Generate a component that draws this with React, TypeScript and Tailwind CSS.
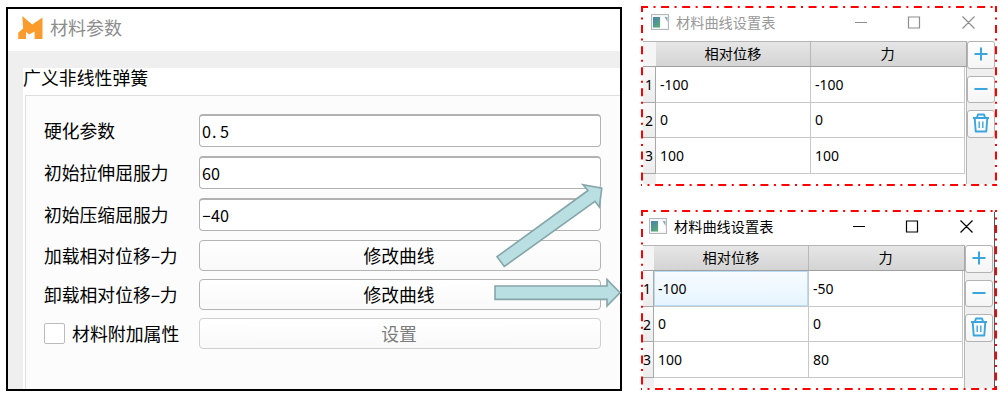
import React from "react";

const inputs = [
  { label: "硬化参数", value: "0.5" },
  { label: "初始拉伸屈服力", value: "60" },
  { label: "初始压缩屈服力", value: "-40" },
];

// Punctuation takes a half-width cell, the same as a digit.
function HalfWidth({ text }: { text: string }) {
  return (
    <>
      {text.split(/([-.])/).map((part, i) => {
        if (part === "-") return <span key={i} className="inline-block w-[9px] -translate-y-px scale-x-[1.7] text-center">-</span>;
        if (part === ".") return <span key={i} className="inline-block w-[9px] pl-px">.</span>;
        return <React.Fragment key={i}>{part}</React.Fragment>;
      })}
    </>
  );
}

function Label({ text }: { text: string }) {
  return (
    <span className="w-[155px] shrink-0 text-[17.8px] leading-none whitespace-nowrap">
      <HalfWidth text={text} />
    </span>
  );
}

function CurveButton({ text, disabled }: { text: string; disabled?: boolean }) {
  return (
    <button
      disabled={disabled}
      className={`flex h-[31px] w-[402px] items-center justify-center rounded-[4px] border bg-linear-to-b from-white to-[#f9f9f9] pr-[2px] text-[17.8px] leading-none ${
        disabled ? "border-[#cfcfcf] text-[#7d7d7d]" : "border-[#b4b4b4] text-black"
      }`}
    >
      {text}
    </button>
  );
}

function MaterialWindow() {
  return (
    <section className="mt-[7px] ml-[6px] flex h-[384px] w-[616px] shrink-0 flex-col border-2 border-black bg-[#efefef]">
      <header className="flex h-[42px] shrink-0 items-start bg-white pt-[6px] pl-[9px]">
        <svg width="28" height="26" viewBox="17 15 28 26" fill="#fb9b2b">
          <path d="M22.3 16 L32.2 24.4 L42.5 17.6 V39 H34.6 V31.4 L29 34.4 L26 31.8 V39 H18.3 V32.6 L23.2 28.6 Z" />
        </svg>
        <h1 className="ml-[5px] pt-[3px] text-[18px] leading-none text-[#8d8d8d]">材料参数</h1>
      </header>
      <div className="mt-[17px] ml-[15px] flex min-h-0 flex-1 flex-col bg-white text-black">
        <h2 className="h-[27px] pt-px text-[17.9px] leading-none">广义非线性弹簧</h2>
        <div className="ml-[2px] flex flex-1 flex-col border-t border-l border-[#dedede] bg-[#fcfcfc] pt-[18px] pl-[18px]">
          {inputs.map((f) => (
            <div key={f.label} className="mb-[9px] flex h-[33px] items-center">
              <Label text={f.label} />
              <div className="flex h-[33px] w-[402px] items-center rounded-[4px] border border-t-2 border-[#b2b2b2] bg-white pl-[2px] text-[16.2px] leading-none">
                <span className="whitespace-nowrap">
                  <HalfWidth text={f.value} />
                </span>
              </div>
            </div>
          ))}
          <div className="mb-[8px] flex h-[31px] items-center">
            <Label text="加载相对位移-力" />
            <CurveButton text="修改曲线" />
          </div>
          <div className="mb-[8px] flex h-[31px] items-center">
            <Label text="卸载相对位移-力" />
            <CurveButton text="修改曲线" />
          </div>
          <div className="flex h-[31px] items-center">
            <span className="h-[21px] w-[21px] shrink-0 rounded-[2px] border border-[#bcbcbc] bg-white" />
            <span className="w-[134px] shrink-0 pl-[7px] text-[17.9px] leading-none whitespace-nowrap">材料附加属性</span>
            <CurveButton text="设置" disabled />
          </div>
        </div>
      </div>
    </section>
  );
}

function DashedFrame({ phases }: { phases: number[] }) {
  const lines = ["M0 1 H356", "M355 0 V180", "M0 179 H356", "M1 0 V180"];
  return (
    <svg className="pointer-events-none absolute inset-0" width="356" height="180" fill="none" stroke="#ff0000" strokeWidth="2">
      {lines.map((d, i) => (
        <path key={d} d={d} strokeDasharray="8 5.5 2 5.57" strokeDashoffset={phases[i]} />
      ))}
    </svg>
  );
}

function SideButton({ children }: { children: React.ReactNode }) {
  return (
    <button className="mb-[7px] flex h-[27.5px] w-[28px] shrink-0 items-center justify-center rounded-[3px] border border-[#b3b3b3] bg-linear-to-b from-white to-[#f5f5f5] pb-px">
      <svg width="18" height="20" viewBox="0 0 18 20" fill="none" stroke="#3aa5de" strokeWidth="2">
        {children}
      </svg>
    </button>
  );
}

type CurveProps = {
  rows: [string, string][];
  active?: boolean;
  phases: number[];
};

function CurveWindow({ rows, active, phases }: CurveProps) {
  return (
    <section className="relative h-[180px] w-[356px] bg-white p-[2px] font-['Noto_Sans','Noto_Sans_CJK_SC',sans-serif]">
      <div className={`flex h-[176px] flex-col overflow-hidden ${active ? "border-r border-[#555555]" : ""}`}>
        <header className={`flex h-[33px] shrink-0 items-start ${active ? "pl-[6px] text-black" : "pl-[8px] text-[#999999]"}`}>
          <svg className="mt-[6px]" width="18" height="16" viewBox="0 0 18 16">
            <defs>
              <linearGradient id={active ? "paneA" : "paneB"} x1="0" y1="0" x2="0.6" y2="1">
                <stop offset="0" stopColor="#4c7fb4" />
                <stop offset="1" stopColor="#58a878" />
              </linearGradient>
            </defs>
            <rect x="0.5" y="0.5" width="17" height="15" fill="#f3f5f7" stroke="#b3b8bd" />
            <rect x="2" y="3" width="7" height="10.5" fill={active ? "url(#paneA)" : "url(#paneB)"} />
            <rect x="10.5" y="3" width="5.5" height="10.5" fill="#ffffff" />
            <path d="M13.5 3 H16.5 V8 Z" fill="#86b0b0" />
          </svg>
          <h2 className="mt-[7px] ml-[7px] w-[100px] font-['Noto_Sans_CJK_SC',sans-serif] text-[14.2px] leading-none whitespace-nowrap">
            材料曲线设置表
          </h2>
          <svg
            className={`mt-[7px] ${active ? "ml-[78px]" : "ml-[78px]"}`}
            width="122"
            height="14"
            viewBox="0 0 122 14"
            fill="none"
            stroke={active ? "#000000" : "#8e8e8e"}
            strokeWidth="1.2"
          >
            <path d="M1 7.5 H13 M54.5 2 H65.5 V13 H54.5 Z M108.5 1.5 L120.5 13.5 M120.5 1.5 L108.5 13.5" />
          </svg>
        </header>
        <div className="flex flex-1">
          <div className={`shrink-0 ${active ? "w-[322px]" : "w-[324px]"}`}>
            <div className="flex h-[26px] border-t border-b border-t-[#b5b5b5] border-b-[#a0a0a0] text-[14.2px] leading-none text-black">
              <div className={`shrink-0 bg-[#f5f5f5] ${active ? "w-[11px]" : "w-[13px]"}`} />
              <div className="flex w-[155px] items-center justify-center border-r border-[#b8b8b8] bg-linear-to-b from-[#e6e6e6] to-[#d4d4d4] pt-px">
                相对位移
              </div>
              <div className="flex flex-1 items-center justify-center border-r border-[#a8a8a8] bg-linear-to-b from-[#e6e6e6] to-[#d4d4d4] pt-px pr-[2px]">
                力
              </div>
            </div>
            <div className="flex h-[117px] flex-col border-r border-[#b5b5b5]">
              {rows.map(([a, b], i) => (
                <div key={a} className="flex h-[35.5px] shrink-0 text-[14px] leading-none text-black">
                  <div
                    className={`flex shrink-0 items-center justify-end border-r border-b border-[#a9a9a9] bg-linear-to-b from-[#fafafa] to-[#ececec] pt-[2px] pr-[2px] ${
                      active ? "w-[11px]" : "w-[13px]"
                    }`}
                  >
                    {i + 1}
                  </div>
                  <div
                    className={`flex w-[155px] items-center border-r border-b border-[#c8c8c8] pt-px pl-[4px] ${
                      active && i === 0 ? "bg-linear-to-b from-[#f8fcff] to-[#e6f4fe] shadow-[inset_0_0_0_1px_#b9dcf6]" : ""
                    }`}
                  >
                    {a}
                  </div>
                  <div className="flex w-[154px] items-center border-r border-b border-[#c8c8c8] pt-px pl-[4px]">{b}</div>
                </div>
              ))}
              <div className={`flex-1 bg-[#efefef] ${active ? "w-[11px]" : "w-[13px]"}`} />
            </div>
          </div>
          <div className="flex flex-1 flex-col bg-[#efefef]">
            <SideButton>
              <path d="M9 3.5 V16.5 M2.5 10 H15.5" />
            </SideButton>
            <SideButton>
              <path d="M2.5 10 H15.5" />
            </SideButton>
            <SideButton>
              <path d="M1 5 H17 M5 4.5 L6 1.5 H12 L13 4.5 M2.7 5 L3.7 18.5 H14.3 L15.3 5" strokeLinejoin="round" strokeWidth="1.9" />
              <path d="M7.2 8.5 V15 M10.8 8.5 V15" strokeWidth="1.4" />
            </SideButton>
          </div>
        </div>
      </div>
      <DashedFrame phases={phases} />
    </section>
  );
}

export default function App() {
  return (
    <main className="relative flex h-[401px] w-[1001px] overflow-hidden bg-white font-['Noto_Sans_CJK_SC',sans-serif]">
      <MaterialWindow />
      <div className="ml-[19px] flex flex-col gap-[24px] pt-[6px]">
        <CurveWindow
          rows={[
            ["-100", "-100"],
            ["0", "0"],
            ["100", "100"],
          ]}
          phases={[1, 2, 7, 2]}
        />
        <CurveWindow
          active
          rows={[
            ["-100", "-50"],
            ["0", "0"],
            ["100", "80"],
          ]}
          phases={[1, 6, 7, 2]}
        />
      </div>
      <svg className="pointer-events-none absolute inset-0" width="1001" height="401" fill="#b9dfe2" stroke="#85a5a9" strokeWidth="1.6">
        <path d="M497 256.7 L588 190.5 L583 184.8 L601.8 188.2 L599.3 207 L595 201.3 L504.3 266.5 Z" />
        <path d="M495 286 H607 V279.5 L620 292.8 L607 306 V299.4 H495 Z" />
      </svg>
    </main>
  );
}
